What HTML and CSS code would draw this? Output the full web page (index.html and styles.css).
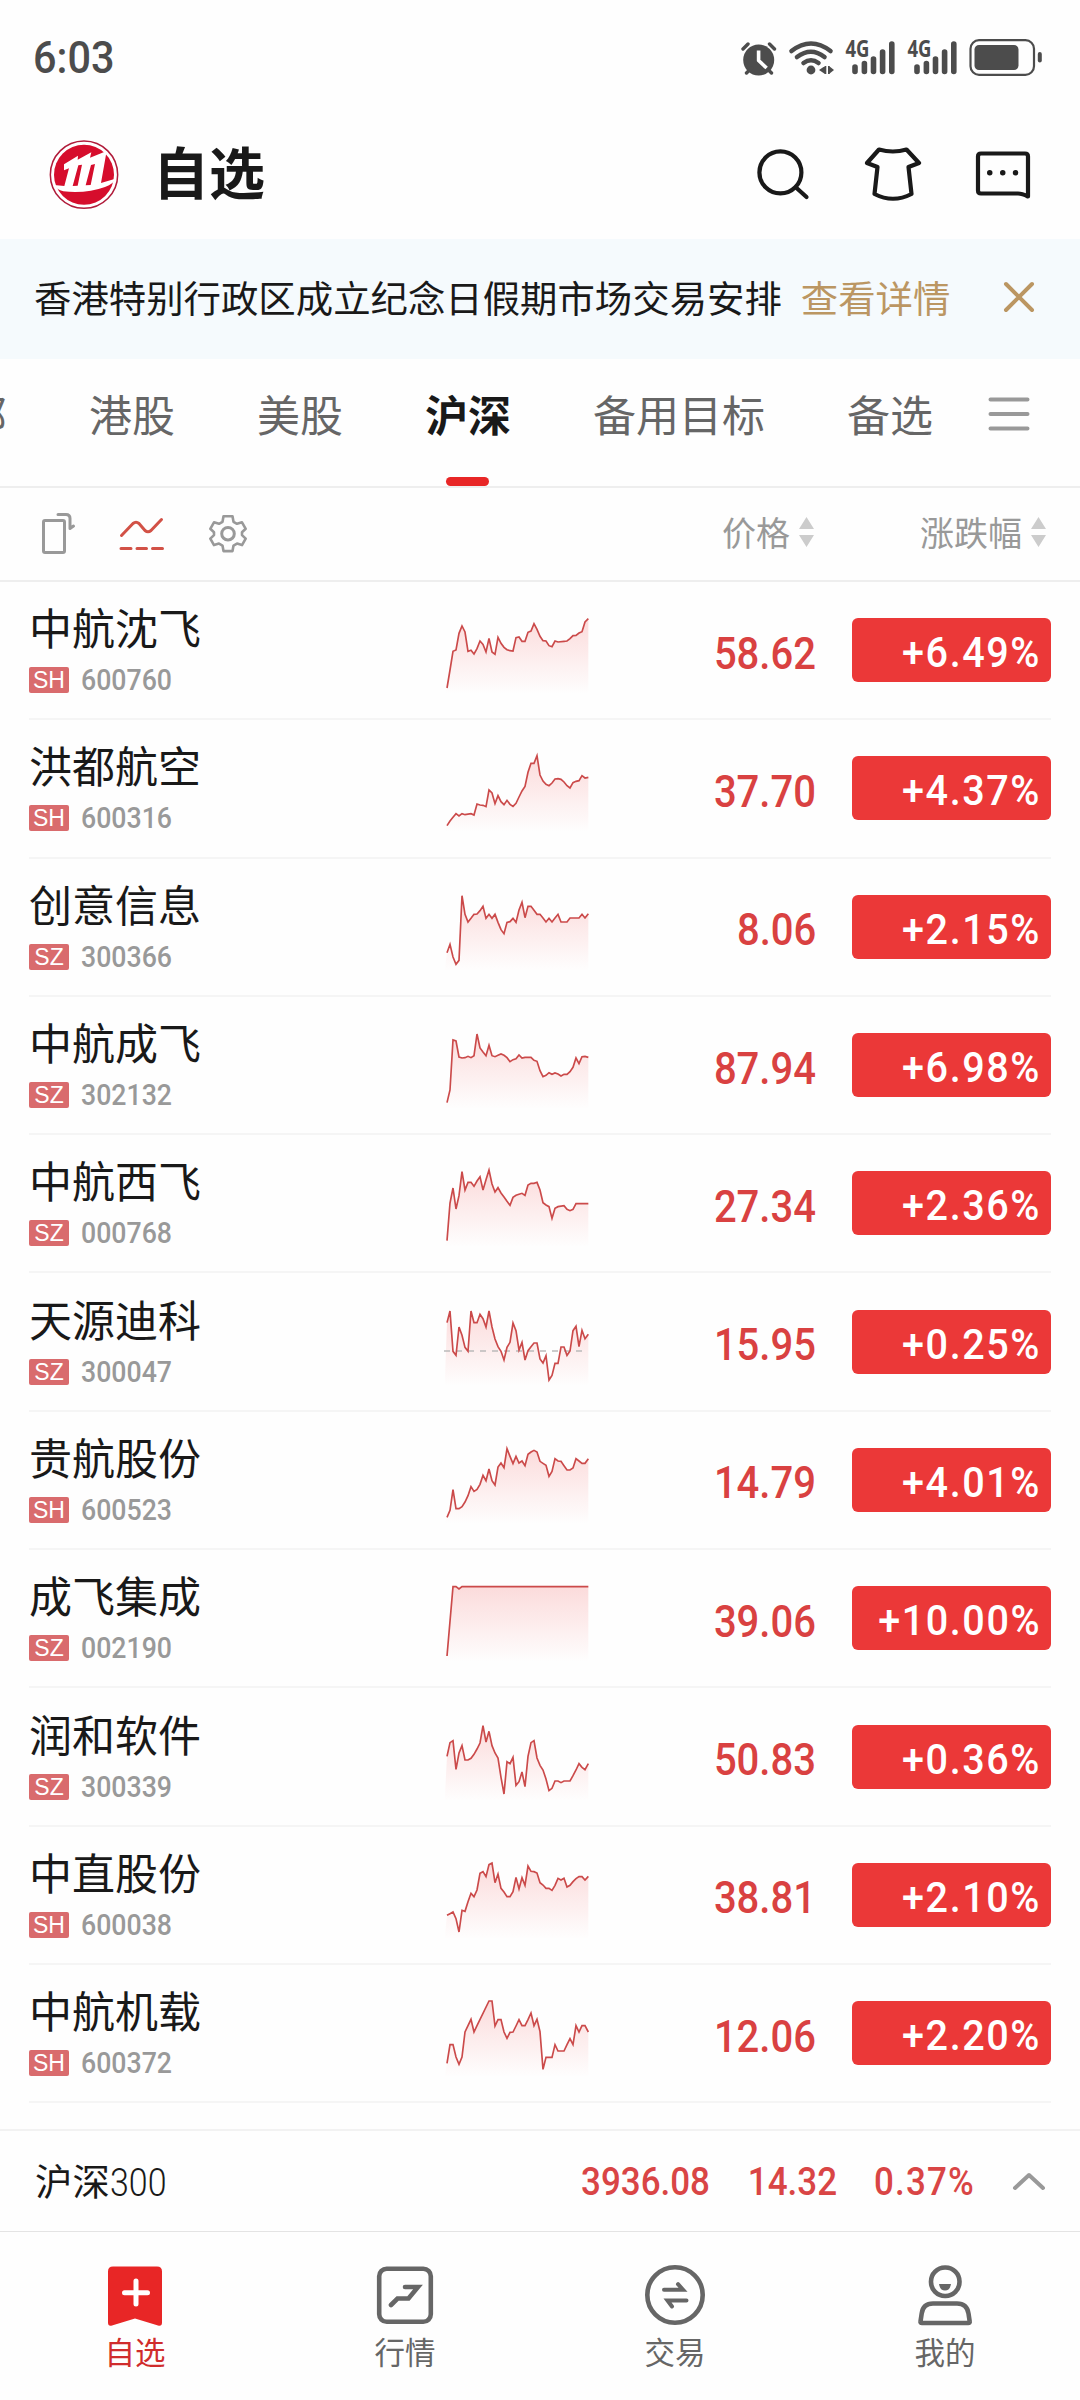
FILE: index.html
```html
<!DOCTYPE html>
<html lang="zh-CN">
<head>
<meta charset="utf-8">
<title>自选</title>
<link rel="stylesheet" href="styles.css">
</head>
<body>
<div class="status">
  <span class="num clock">6:03</span>
  <svg class="status-icons" width="304" height="54" viewBox="740 30 304 54">
    <g fill="none" stroke="#4c4c4c" stroke-linecap="round">
      <circle cx="758.7" cy="60" r="15.5" fill="#4c4c4c" stroke="none"/>
      <path stroke-width="3.4" d="M743 49l5-5M774.500 49l-5-5M746.500 73l5-5M771.500 73l-5-5"/>
      <path stroke="#fff" stroke-width="3.600" stroke-linecap="butt" stroke-linejoin="round" d="M758.600 50.500v10l8 7.500"/>
      <path stroke-width="4.600" d="M791.500 51Q811 36 830.500 51M797 57Q811 46.500 824.500 57M803.500 63Q811 57.500 818.500 63"/>
      <circle cx="811" cy="70" r="4.400" fill="#4c4c4c" stroke="none"/>
      <path fill="#4c4c4c" stroke="none" d="M819 70l6-4v8zM829 66l5 4-5 4zM824.500 66h1.800v8h-1.800zM828 66h1.800v8h-1.800z"/>
      <path stroke-width="5.600" d="M855 67v4.500M864.400 63.500v8M873.500 59v12.500M882.600 52v19.500M891.800 44v27.500M917 67v4.500M926.400 63.500v8M935.500 59v12.500M944.600 52v19.500M953.800 44v27.500"/>
      <rect x="970.500" y="40.200" width="63.500" height="34.600" rx="8.500" stroke-width="2.200"/>
      <rect x="974.500" y="45" width="44" height="25" rx="4.500" fill="#4c4c4c" stroke="none"/>
      <path stroke-width="4" d="M1039.800 54v6.500"/>
    </g>
    <text class="net" x="845.500" y="57" textLength="24" lengthAdjust="spacingAndGlyphs">4G</text>
    <text class="net" x="907.500" y="57" textLength="24" lengthAdjust="spacingAndGlyphs">4G</text>
  </svg>
</div>

<header class="header">
  <svg width="70" height="72" viewBox="27 30 210 216">
    <circle cx="132" cy="137" r="101" fill="#fff" stroke="#b01b3a" stroke-width="4.500"/>
    <circle cx="132" cy="137" r="90" fill="#d60d2c"/>
    <path fill="#fff" d="M72 106L114 80 113 92 154 70 150 86 200 66 183 162 226 149Q222 164 195 174 140 194 70 187 50 182 42 168L73 171 87 118 72 124z"/>
    <path fill="#d60d2c" d="M115 109L126 107 113 170 98 171zM153 108L165 105 152 168 137 169z"/>
  </svg>
  <h1>自选</h1>
  <svg class="header-icons" width="278" height="60" viewBox="754 144 278 60">
    <g fill="none" stroke="#191919" stroke-width="4.200" stroke-linejoin="round" stroke-linecap="round">
      <circle cx="780.400" cy="172.400" r="21"/>
      <path d="M796 187.500l10.500 9.500"/>
      <path d="M879 149.500Q893 153.500 906.500 149.500L919 163 908.500 167 911.500 194Q893 203.500 874.500 194L877.500 167 867 163z"/>
      <path d="M981 153.500h44q3 0 3 3v40q-6-3-10-3h-37q-3 0-3-3v-34q0-3 3-3z"/>
      <path stroke-width="5.400" d="M989.700 172.700h.1M1002.700 172.700h.1M1015.500 172.700h.1"/>
    </g>
  </svg>
</header>

<div class="notice">
  <span>香港特别行政区成立纪念日假期市场交易安排</span>
  <a>查看详情</a>
  <svg width="32" height="32" viewBox="0 0 32 32"><path d="M3 3l26 26M29 3L3 29" stroke="#bb9662" stroke-width="4" stroke-linecap="round"/></svg>
</div>

<nav class="tabs">
  <div class="tab-list">
    <span>全部</span><span>港股</span><span>美股</span><span class="active">沪深</span><span>备用目标</span><span>备选</span>
  </div>
  <svg class="menu" width="42" height="34" viewBox="0 0 42 34"><path d="M2.500 2.500h37M2.500 17h37M2.500 31.500h37" stroke="#999" stroke-width="4" stroke-linecap="round"/></svg>
</nav>

<div class="toolbar">
  <svg width="210" height="44" viewBox="40 510 210 44">
    <g fill="none" stroke="#999" stroke-width="3" stroke-linejoin="round" stroke-linecap="round">
      <rect x="43.500" y="519.500" width="21" height="32" rx="1.500"/>
      <path d="M58 513.500h8q4 0 4 4v10l3.500-2.500"/>
      <path stroke="#d25146" stroke-width="3" d="M121.500 534.500l11.500-12q3-2.500 6 0l6 7q3 2.500 6 0l10.500-11"/>
      <path stroke="#d25146" stroke-width="3" d="M121 547.500h10M137 547.500h9.500M152.500 547.500h10"/>
      <circle cx="228" cy="532.700" r="6.300"/>
      <path stroke-width="2.600" d="M223.500 515.300h9l1 5.500 3.500 2 5-1.500 3.700 6.500-3.700 3.500v2.800l3.700 3.500-3.700 6.500-5-1.500-3.500 2-1 5.500h-9l-1-5.500-3.500-2-5 1.500-3.700-6.500 3.700-3.500v-2.800l-3.700-3.500 3.700-6.500 5 1.500 3.500-2z"/>
    </g>
  </svg>
  <span class="sort price-head">价格<svg width="15" height="30" viewBox="0 0 15 30"><path fill="#ccc" d="M7.500 0L15 12H0zM7.500 30L15 18H0z"/></svg></span>
  <span class="sort">涨跌幅<svg width="15" height="30" viewBox="0 0 15 30"><path fill="#ccc" d="M7.500 0L15 12H0zM7.500 30L15 18H0z"/></svg></span>
</div>

<main class="list" id="list"></main>

<div class="index-bar">
  <span class="index-name">沪深<span class="num">300</span></span>
  <span class="num">3936.08</span>
  <span class="num">14.32</span>
  <span class="num percent">0.37%</span>
  <svg width="34" height="20" viewBox="0 0 34 20"><path d="M3 17L17 4 31 17" fill="none" stroke="#999" stroke-width="4" stroke-linecap="round" stroke-linejoin="round"/></svg>
</div>

<footer class="bottom-nav">
  <div class="nav-item active">
    <svg width="64" height="64" viewBox="0 0 64 64"><path fill="#e82626" d="M10 2.500h44q5 0 5 5v51q0 4-4 3L32 54.500 9 61.500q-4 1-4-3V7.500q0-5 5-5z"/><path d="M21.500 28.700h23M33 17v23" stroke="#fff" stroke-width="5" stroke-linecap="round"/></svg>
    自选
  </div>
  <div class="nav-item">
    <svg width="64" height="64" viewBox="0 0 64 64"><g fill="none" stroke="#666" stroke-linecap="round"><rect x="6.200" y="4.700" width="51.600" height="53" rx="7.500" stroke-width="4.600"/><path stroke-width="4.600" d="M18 41l6.500-6.500h11L45 23H32"/></g></svg>
    行情
  </div>
  <div class="nav-item">
    <svg width="64" height="64" viewBox="0 0 64 64"><g fill="none" stroke="#666" stroke-linecap="round"><circle cx="32" cy="31" r="27.700" stroke-width="4.600"/><path stroke-width="4" d="M21 25.700h19l-5-5.500M43.500 36.500h-19l4.500 6"/></g></svg>
    交易
  </div>
  <div class="nav-item">
    <svg width="64" height="64" viewBox="0 0 64 64"><g fill="none" stroke="#666" stroke-width="4.600" stroke-linejoin="round"><rect x="18" y="3.500" width="28.500" height="28.500" rx="14"/><path d="M20 39.500h24q10 0 11.500 10l1.200 8q.3 1.500-1.500 1.500H9q-1.800 0-1.500-1.500l1.200-8q1.300-10 11.300-10z"/></g><path fill="#666" d="M26 20h12q-1 6.500-6 6.500T26 20z"/></svg>
    我的
  </div>
</footer>
<script src="app.js"></script>
</body>
</html>
```
FILE: styles.css
```css
* { box-sizing: border-box; }
body {
  margin: 0;
  width: 1080px;
  height: 2400px;
  overflow: hidden;
  background: #fefefe;
  color: #191919;
  font-family: "Noto Sans CJK SC", sans-serif;
  display: flex;
  flex-direction: column;
}
svg { display: block; flex: none; }
.num {
  font-family: Roboto, sans-serif;
  font-weight: 500;
  display: inline-block;
  transform: scaleX(.92);
  transform-origin: right center;
}
.status {
  height: 118px;
  padding: 0 36px 4px 33px;
  display: flex;
  justify-content: space-between;
  align-items: center;
  color: #4c4c4c;
}
.clock { font-size: 45px; transform-origin: left center; }
.net { font: 700 23px "Open Sans", sans-serif; fill: #4c4c4c; }
.header {
  height: 121px;
  padding: 0 48px 8px 49px;
  display: flex;
  align-items: center;
}
.header h1 { margin: 0 0 0 34px; padding-bottom: 9px; font-size: 56px; font-weight: 700; line-height: 60px; }
.header-icons { margin: 0 0 2px auto; }
.notice {
  height: 119.5px;
  padding: 0 45px 3px 34px;
  background: #f5fafd;
  display: flex;
  align-items: center;
  font-size: 37.4px;
}
.notice a { color: #bb9662; margin-left: 19px; }
.notice svg { margin-left: auto; }
.tabs {
  height: 129px;
  border-bottom: 2px solid #eee;
  display: flex;
}
.tab-list {
  width: 970px;
  padding-left: 7px;
  overflow: hidden;
  display: flex;
  gap: 82px;
  font-size: 43px;
  line-height: 108px;
  color: #666;
  white-space: nowrap;
}
.tab-list span:first-child { margin-left: -86px; }
.tab-list .active { color: #191919; font-weight: 700; position: relative; }
.tab-list .active::after {
  content: "";
  position: absolute;
  left: 21px;
  top: 118px;
  width: 43px;
  height: 9px;
  border-radius: 5px;
  background: #e82626;
}
.menu { margin: 38px 0 0 18px; }
.toolbar {
  height: 94.5px;
  padding: 0 34px 2px 40px;
  border-bottom: 2px solid #eee;
  display: flex;
  align-items: center;
  color: #999;
  font-size: 34px;
  line-height: 44px;
}
.sort { display: flex; align-items: center; gap: 9px; padding-bottom: 2px; }
.price-head { margin: 0 106px 0 auto; }
.list { height: 1547px; flex: none; padding: 0 29px; }
.row {
  height: 138.3px;
  border-bottom: 2px solid #f5f5f5;
  display: grid;
  grid-template-columns: 401px 180px 206px 36px 199px;
  align-items: center;
}
.name { padding-top: 6px; font-size: 43px; line-height: 54px; }
.meta { display: flex; align-items: center; gap: 12px; }
.tag {
  width: 40px;
  height: 26px;
  border-radius: 2px;
  background: #d96b6d;
  color: #fff;
  font: 23px/27px "Liberation Sans", sans-serif;
  text-align: center;
}
.code { font-size: 29px; line-height: 54px; color: #999; transform-origin: left center; }
.price { font-size: 43.5px; color: #d94141; text-align: right; }
.change {
  grid-column: 5;
  height: 64px;
  border-radius: 6px;
  background: #eb3838;
  color: #fff;
  font-size: 43px;
  line-height: 60px;
  text-align: right;
  padding-right: 10px;
}
.change .num { letter-spacing: 1.7px; }
.index-bar {
  height: 103px;
  border-top: 2px solid #f2f2f2;
  border-bottom: 1px solid #e4e4e4;
  padding-left: 35px;
  display: grid;
  grid-template-columns: 300px 375px 127px 138px 1fr;
  align-items: center;
  font-size: 38px;
  color: #d94545;
  text-align: right;
}
.index-bar > .num { padding-top: 1px; }
.index-bar > .percent { letter-spacing: 1.3px; }
.index-name { padding-bottom: 2px; text-align: left; font-size: 37.4px; color: #191919; }
.index-name .num { font-size: 39px; font-weight: 300; transform: scaleX(.87); transform-origin: left center; }
.index-bar svg { margin-left: 37px; }
.bottom-nav { flex: 1; display: grid; grid-template-columns: repeat(4, 270px); padding-top: 32px; }
.nav-item {
  display: flex;
  flex-direction: column;
  align-items: center;
  font-size: 30.5px;
  line-height: 47px;
  color: #666;
}
.nav-item.active { color: #d02c2c; }
```
FILE: app.js
```js
// Each trend is a list of "x,y" points; top is the y value at the row's upper edge.
const stocks = [
  { name: "中航沈飞", market: "SH", code: "600760", price: "58.62", change: "+6.49%", top: -24,
    trend: "51,294 60,240 69,184 78,180 87,130 96,108 105,126 114,184 123,181 132,192 141,176 150,153 159,163 168,186 177,145 186,186 195,193 204,142 213,160 222,172 231,179 240,182 249,183 258,143 267,141 276,154 285,154 294,127 303,123 312,101 321,118 330,139 339,152 348,153 357,167 366,170 375,153 384,156 402,154 411,153 420,146 429,137 438,136 447,129 456,125 465,96 475,86" },
  { name: "洪都航空", market: "SH", code: "600316", price: "37.70", change: "+4.37%", top: 391,
    trend: "51,708 60,694 69,683 78,672 87,679 96,672 105,675 123,672 132,676 141,643 150,646 159,647 168,651 177,601 186,610 195,642 204,618 213,636 222,645 231,632 240,644 249,650 258,641 267,622 276,604 285,590 294,548 303,521 312,521 321,498 330,556 339,574 348,584 357,588 366,580 375,568 384,567 393,569 402,577 411,588 420,595 429,579 438,575 447,573 456,558 465,565 475,563" },
  { name: "创意信息", market: "SZ", code: "300366", price: "8.06", change: "+2.15%", top: 806,
    trend: "51,1087 60,1062 69,1100 78,1122 87,1110 96,916 105,972 114,995 123,984 132,972 141,971 150,961 159,948 168,984 177,972 186,984 195,972 204,996 213,1018 222,1030 231,996 240,994 249,984 258,996 267,959 276,936 285,982 294,948 303,948 312,960 321,972 330,972 339,983 348,995 357,984 366,995 375,983 384,972 393,995 411,995 420,983 447,983 456,972 465,983 475,970" },
  { name: "中航成飞", market: "SZ", code: "302132", price: "87.94", change: "+6.98%", top: -9,
    trend: "51,308 60,270 69,120 78,123 87,171 96,174 105,173 114,169 123,173 132,167 141,102 150,144 159,156 168,167 177,136 186,167 195,170 204,166 213,162 222,166 231,173 240,185 249,179 258,176 267,165 276,174 285,172 303,172 312,181 321,184 330,212 339,230 348,226 357,218 366,223 375,219 384,222 393,228 402,223 411,223 420,215 429,202 438,174 447,191 456,170 465,169 475,172" },
  { name: "中航西飞", market: "SZ", code: "000768", price: "27.34", change: "+2.36%", top: 406,
    trend: "51,723 60,610 69,565 78,628 87,588 96,516 105,571 114,548 123,548 132,560 141,544 150,531 159,571 168,540 177,511 186,553 195,577 204,564 213,580 222,592 231,605 240,617 249,593 258,587 267,584 276,581 285,587 294,556 303,551 312,551 321,548 330,571 339,609 348,616 357,621 366,656 375,626 384,621 402,618 411,629 420,633 429,629 438,612 475,612" },
  { name: "天源迪科", market: "SZ", code: "300047", price: "15.95", change: "+0.25%", top: 820, base: 1051,
    trend: "51,966 60,931 69,1052 78,1064 87,979 96,1004 105,1040 114,1052 123,931 132,966 141,966 150,941 159,954 168,979 177,931 186,979 195,1015 204,1038 213,1052 222,1078 231,1040 240,1025 249,967 258,990 267,1048 276,1025 285,1078 294,1050 303,1038 312,1027 321,1027 330,1075 339,1087 348,1065 357,1138 366,1124 375,1088 384,1088 393,1039 402,1039 411,1064 420,1051 429,990 438,977 447,1038 456,989 465,1014 475,1001" },
  { name: "贵航股份", market: "SH", code: "600523", price: "14.79", change: "+4.01%", top: -25,
    trend: "51,291 60,270 69,208 78,265 87,265 96,259 105,245 114,226 123,199 132,213 141,207 150,192 159,165 168,181 177,146 186,181 195,194 204,140 213,128 222,142 231,85 240,108 249,130 258,108 267,128 276,122 285,136 294,102 303,95 312,90 321,95 330,123 339,129 348,135 357,168 366,153 375,115 384,122 393,123 402,136 411,149 420,149 429,143 438,115 447,122 456,129 465,129 475,115" },
  { name: "成飞集成", market: "SZ", code: "002190", price: "39.06", change: "+10.00%", top: 390,
    trend: "51,708 69,500 78,500 87,507 96,500 475,500" },
  { name: "润和软件", market: "SZ", code: "300339", price: "50.83", change: "+0.36%", top: 805,
    trend: "51,1007 60,966 69,960 78,1046 87,997 96,975 105,1018 114,1018 123,1013 132,1001 141,985 150,967 159,915 168,964 177,932 186,975 195,997 204,1012 213,1070 222,1120 231,1023 240,1029 249,1010 258,1094 267,1083 276,1054 285,1098 294,1007 303,966 312,960 321,1012 330,1034 339,1048 348,1075 357,1110 366,1103 375,1081 384,1081 393,1086 402,1081 420,1081 429,1065 438,1048 447,1029 456,1040 465,1047 475,1029" },
  { name: "中直股份", market: "SH", code: "600038", price: "38.81", change: "+2.10%", top: -10,
    trend: "51,255 60,250 69,245 78,265 87,305 96,240 105,243 114,214 123,189 132,199 141,179 150,129 159,124 168,139 177,103 186,98 195,157 204,131 213,174 222,185 231,199 240,199 249,184 258,141 267,176 276,142 285,165 294,107 303,123 312,124 321,128 330,157 339,164 348,174 357,174 366,180 375,165 384,144 393,149 402,144 411,170 420,165 429,154 438,145 447,139 456,139 465,149 475,138" },
  { name: "中航机载", market: "SH", code: "600372", price: "12.06", change: "+2.20%", top: 405,
    trend: "51,700 60,644 69,644 78,681 87,703 96,681 105,606 114,587 123,568 132,606 141,587 177,513 186,513 195,588 204,569 213,569 222,606 231,625 240,607 249,606 258,588 267,569 276,587 285,587 294,569 303,549 312,587 321,568 330,605 339,718 348,682 366,682 375,644 384,663 402,663 411,644 420,626 429,644 438,587 447,606 456,587 465,587 475,606" }
];

document.getElementById("list").innerHTML = stocks.map((s, i) => {
  const bottom = s.top + 336;
  const base = s.base ? `<path d="M42 ${s.base}H458" stroke="#bbb" stroke-width="4" stroke-dasharray="18"/>` : "";
  return `<div class="row">
    <div>
      <div class="name">${s.name}</div>
      <div class="meta"><span class="tag">${s.market}</span><span class="num code">${s.code}</span></div>
    </div>
    <svg width="180" height="136" viewBox="0 ${s.top} 540 408">
      <linearGradient id="g${i}" gradientUnits="userSpaceOnUse" x1="0" x2="0" y1="${s.top + 110}" y2="${bottom}">
        <stop offset="0" stop-color="#f03c3c" stop-opacity=".18"/><stop offset="1" stop-color="#f03c3c" stop-opacity="0"/>
      </linearGradient>
      <polygon points="44,${bottom} ${s.trend} 475,${bottom}" fill="url(#g${i})"/>
      ${base}
      <polyline points="${s.trend}" fill="none" stroke="#cb4a4a" stroke-width="5"/>
    </svg>
    <div class="price"><span class="num">${s.price}</span></div>
    <div class="change"><span class="num">${s.change}</span></div>
  </div>`;
}).join("");
```
